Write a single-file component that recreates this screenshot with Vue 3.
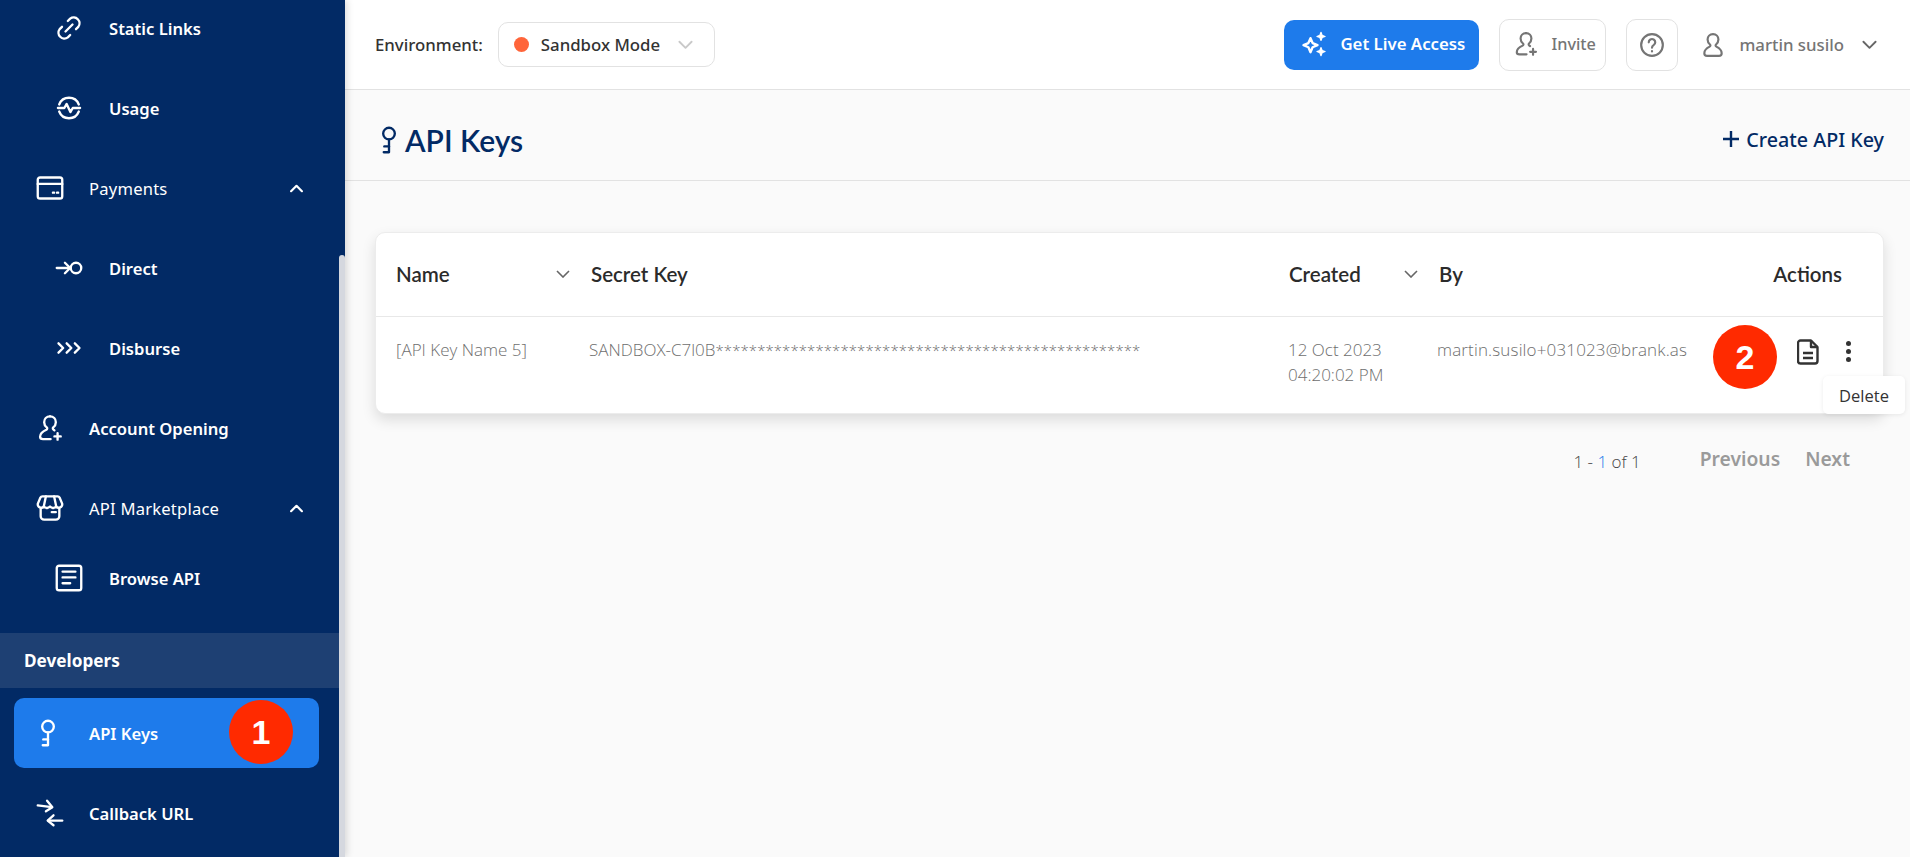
<script setup>
const icons = {
  link: ['M9 15l6-6', 'M11 6l2-2a5 5 0 0 1 7 7l-2 2', 'M13 18l-2 2a5 5 0 0 1-7-7l2-2'],
  usage: ['M3.600 9a9 9 0 0 1 16.800 0', 'M3.600 15a9 9 0 0 0 16.800 0', 'M2.500 12H8l2-3.500 3.200 7 2-3.500h6.300'],
  card: ['M3.500 3h17a2 2 0 0 1 2 2v14a2 2 0 0 1-2 2h-17a2 2 0 0 1-2-2V5a2 2 0 0 1 2-2z', 'M1.500 8.500h21', 'M14.500 16h1M18 16h1'],
  direct: ['M1.500 12h11', 'M8.500 7.500l4.500 4.500-4.500 4.500', 'M18 7.500a4.500 4.500 0 1 1 0 9 4.500 4.500 0 0 1 0-9z'],
  disburse: ['M3 8l4 4-4 4', 'M10 8l4 4-4 4', 'M17 8l4 4-4 4'],
  account: ['M12 2c-3 0-5 2.200-5 5 0 2 1 3.500 2.200 4.500.7.6.5 1.600-.3 2C5.500 15 3.500 17 3.500 19.500c0 1.300 1 2 2.500 2h6.500', 'M12 2c3 0 5 2.200 5 5 0 2-1 3.500-2.200 4.500-.5.4-.5 1.200 0 1.700l1 .8', 'M18.500 16.500v5.500M15.800 19.200h5.400'],
  store: ['M5.500 2h13c.8 0 1.400.4 1.700 1l2.300 5.500a3 3 0 0 1-5.200 2.300 3.500 3.500 0 0 1-5.300 0 3.500 3.500 0 0 1-5.300 0A3 3 0 0 1 1.500 8.500L3.800 3c.3-.6.9-1 1.700-1z', 'M8.500 2L6.700 10.500M15.500 2l1.800 8.500', 'M4 12.500V19a3 3 0 0 0 3 3h10a3 3 0 0 0 3-3v-6.500', 'M13.500 15.500h3.500'],
  doc: ['M3.500 1.500h17a2 2 0 0 1 2 2v17a2 2 0 0 1-2 2h-17a2 2 0 0 1-2-2v-17a2 2 0 0 1 2-2z', 'M6.500 6.500h11M6.500 11.500h11M6.500 16.500h6.500'],
  key: ['M12 1.500a5 5 0 1 1 0 10 5 5 0 0 1 0-10z', 'M12 11.500V22.500H7.500', 'M12 17.500H8'],
  callback: ['M1.500 5.500l12 1.500', 'M9.500 1.500L14 7l-5.500 3.500', 'M22.500 18.500h-12', 'M15 14l-5 4.500 5 4']
}
const nav = [
  { label: 'Static Links', icon: 'link', sub: true },
  { label: 'Usage', icon: 'usage', sub: true },
  { label: 'Payments', icon: 'card', open: true },
  { label: 'Direct', icon: 'direct', sub: true },
  { label: 'Disburse', icon: 'disburse', sub: true },
  { label: 'Account Opening', icon: 'account', strong: true },
  { label: 'API Marketplace', icon: 'store', open: true }
]
</script>

<template>
  <div class="page">
    <aside class="sidebar">
      <div class="thumb"></div>
      <nav class="nav">
        <div
          v-for="item in nav"
          :key="item.label"
          class="row"
          :class="{ sub: item.sub, top: !item.sub, strong: item.strong }"
        >
          <svg class="ico" viewBox="0 0 24 24">
            <path v-for="d in icons[item.icon]" :key="d" :d="d" />
          </svg>
          <span>{{ item.label }}</span>
          <svg v-if="item.open" class="up" viewBox="0 0 12 8"><path d="M1 6.500l5-5 5 5" /></svg>
        </div>
        <div class="row sub browse">
          <svg class="ico" viewBox="0 0 24 24">
            <path v-for="d in icons.doc" :key="d" :d="d" />
          </svg>
          <span>Browse API</span>
        </div>
        <div class="band">Developers</div>
        <div class="active">
          <svg class="ico" viewBox="0 0 24 24">
            <path v-for="d in icons.key" :key="d" :d="d" />
          </svg>
          <span>API Keys</span>
          <b class="badge one">1</b>
        </div>
        <div class="row top strong">
          <svg class="ico" viewBox="0 0 24 24">
            <path v-for="d in icons.callback" :key="d" :d="d" />
          </svg>
          <span>Callback URL</span>
        </div>
      </nav>
    </aside>

    <main class="main">
      <header class="topbar">
        <span class="env">Environment:</span>
        <div class="select">
          <i class="dot"></i>
          <span>Sandbox Mode</span>
          <svg class="chev grey" viewBox="0 0 16 10"><path d="M1.500 1.500L8 8l6.500-6.500" /></svg>
        </div>
        <div class="spacer"></div>
        <button class="live">
          <svg class="spark" viewBox="0 0 24 24">
            <path d="M9 7l1.800 4.200L15 13l-4.200 1.800L9 19l-1.800-4.200L3 13l4.200-1.800z" />
            <path class="fill" d="M18 2l1 2.500 2.500 1-2.500 1L18 9l-1-2.500-2.500-1 2.500-1zM18 15l1 2.500 2.500 1-2.500 1L18 22l-1-2.500-2.500-1 2.500-1z" />
          </svg>
          Get Live Access
        </button>
        <button class="ghost invite">
          <svg class="person" viewBox="0 0 24 24">
            <path v-for="d in icons.account" :key="d" :d="d" />
          </svg>
          Invite
        </button>
        <button class="ghost help">
          <svg class="person" viewBox="0 0 24 24">
            <circle cx="12" cy="12" r="10" />
            <path d="M9 9.500a3 3 0 1 1 4.500 2.600c-1 .6-1.500 1.200-1.500 2.400M12 17.500v.5" />
          </svg>
        </button>
        <div class="user">
          <svg class="person" viewBox="0 0 24 24">
            <path d="M12 2c-3 0-5 2.200-5 5 0 2 1 3.500 2.200 4.500.7.6.5 1.600-.3 2C6 15 4 17 4 19.500 4 21 5 22 6.500 22h11c1.500 0 2.500-1 2.500-2.500 0-2.500-2-4.500-4.900-6-.8-.4-1-1.400-.3-2C16 10.500 17 9 17 7c0-2.800-2-5-5-5z" />
          </svg>
          <span>martin susilo</span>
          <svg class="chev dark" viewBox="0 0 16 10"><path d="M1.500 1.500L8 8l6.500-6.500" /></svg>
        </div>
      </header>

      <section class="titlebar">
        <h1>
          <svg viewBox="0 0 24 24">
            <path v-for="d in icons.key" :key="d" :d="d" />
          </svg>
          API Keys
        </h1>
        <a class="create">
          <svg viewBox="0 0 18 18"><path d="M9 1v16M1 9h16" /></svg>
          Create API Key
        </a>
      </section>

      <section class="content">
        <div class="card">
          <div class="thead">
            <div class="th">Name<svg class="sort" viewBox="0 0 14 8"><path d="M1 1l6 6 6-6" /></svg></div>
            <div class="th">Secret Key</div>
            <div class="th">Created<svg class="sort" viewBox="0 0 14 8"><path d="M1 1l6 6 6-6" /></svg></div>
            <div class="th">By</div>
            <div class="th right">Actions</div>
          </div>
          <div class="tbody">
            <div class="td">[API Key Name 5]</div>
            <div class="td">SANDBOX-C7l0B<span class="stars">***************************************************</span></div>
            <div class="td">12 Oct 2023<br />04:20:02 PM</div>
            <div class="td email">martin.susilo+031023@brank.as</div>
            <div class="actions">
              <b class="badge two">2</b>
              <svg class="docico" viewBox="0 0 22 26">
                <path d="M3.500 1.500H14L20.500 8v14a2.500 2.500 0 0 1-2.500 2.500H3.500A2.500 2.500 0 0 1 1 22V4a2.500 2.500 0 0 1 2.500-2.500z" />
                <path d="M14 1.500V8h6.500M6 14h10M6 19h10" />
              </svg>
              <span class="dots"><i></i><i></i><i></i></span>
              <div class="tooltip">Delete</div>
            </div>
          </div>
        </div>
        <div class="pager">
          <span class="count">1 - <em>1</em> of 1</span>
          <span class="pg prev">Previous</span>
          <span class="pg">Next</span>
        </div>
      </section>
    </main>
  </div>
</template>

<style>
html, body { margin: 0; overflow: hidden; }
</style>

<style scoped>
.page {
  display: flex;
  width: 1910px;
  height: 857px;
  overflow: hidden;
  font-family: "Noto Sans", "Open Sans", sans-serif;
  background: #fafafa;
}
.sidebar {
  position: relative;
  flex: 0 0 345px;
  height: 857px;
  overflow: hidden;
  background: #022a65;
  color: #fff;
  box-shadow: 2px 0 7px rgba(0, 0, 0, 0.14);
  z-index: 2;
}
.thumb {
  position: absolute;
  right: 0;
  top: 255px;
  bottom: 0;
  width: 6px;
  border-radius: 3px 3px 0 0;
  background: #d5d8df;
}
.nav { margin-top: -12px; }
.row {
  display: flex;
  align-items: center;
  height: 80px;
  font-size: 16.600px;
  font-weight: 600;
}
.row.sub { padding-left: 55px; }
.row.sub .ico { margin-right: 26px; }
.row.top { padding-left: 36px; font-weight: 400; letter-spacing: 0.2px; }
.row.top .ico { margin-right: 25px; }
.row.strong { font-weight: 600; letter-spacing: 0; }
.row.browse { height: 58px; margin-top: 1px; margin-bottom: 26px; }
.ico {
  width: 28px;
  height: 28px;
  flex: none;
  fill: none;
  stroke: #fff;
  stroke-width: 2;
  stroke-linecap: round;
  stroke-linejoin: round;
}
.up {
  position: absolute;
  left: 290px;
  width: 13px;
  height: 9px;
  fill: none;
  stroke: #fff;
  stroke-width: 2;
  stroke-linecap: round;
  stroke-linejoin: round;
}
.band {
  display: flex;
  align-items: center;
  height: 55px;
  width: 339px;
  padding-left: 24px;
  box-sizing: border-box;
  background: #1e4073;
  font-size: 17.200px;
  font-weight: 700;
}
.active {
  position: relative;
  display: flex;
  align-items: center;
  width: 305px;
  height: 70px;
  margin: 10px 0 5px 14px;
  padding-left: 20px;
  box-sizing: border-box;
  border-radius: 10px;
  background: #1e7beb;
  font-size: 16.600px;
  font-weight: 600;
}
.active .ico { margin-right: 27px; }
.badge {
  position: absolute;
  display: flex;
  align-items: center;
  justify-content: center;
  width: 64px;
  height: 64px;
  border-radius: 50%;
  background: #ff2a00;
  color: #fff;
  font-family: "Liberation Sans", Arial, sans-serif;
  font-size: 34px;
  font-weight: 700;
}
.badge.one { left: 215px; top: 2px; }
.badge.two { left: -77px; top: -12px; z-index: 1; }

.main { flex: 1; min-width: 0; display: flex; flex-direction: column; }
.topbar {
  display: flex;
  align-items: center;
  height: 89px;
  flex: none;
  padding: 0 33px 0 30px;
  background: #fff;
  border-bottom: 1px solid #e2e2e2;
}
.env { font-size: 16.800px; font-weight: 500; color: #333; margin-right: 15px; }
.select {
  display: flex;
  align-items: center;
  width: 217px;
  height: 45px;
  box-sizing: border-box;
  padding-left: 15px;
  border: 1px solid #e2e2e2;
  border-radius: 10px;
  font-size: 16.800px;
  font-weight: 500;
  color: #333;
}
.dot { width: 15px; height: 15px; border-radius: 50%; background: #ff653a; margin-right: 12px; }
.chev { width: 15px; height: 10px; fill: none; stroke-width: 2; stroke-linecap: round; stroke-linejoin: round; }
.chev.grey { stroke: #c9c9c9; margin-left: 18px; }
.chev.dark { stroke: #666; margin-left: 18px; }
.spacer { flex: 1; }
button { font-family: inherit; cursor: pointer; }
.live {
  display: flex;
  align-items: center;
  width: 195px;
  height: 50px;
  padding: 0 0 2px 16px;
  border: 0;
  border-radius: 10px;
  background: #1e7beb;
  color: #fff;
  font-size: 16.800px;
  font-weight: 600;
}
.spark { width: 28px; height: 28px; margin-right: 12px; fill: none; stroke: #fff; stroke-width: 2; stroke-linejoin: round; }
.spark .fill { fill: #fff; stroke-width: 1; }
.ghost {
  display: flex;
  align-items: center;
  height: 52px;
  box-sizing: border-box;
  border: 1px solid #e2e2e2;
  border-radius: 10px;
  background: #fff;
  color: #757575;
  font-size: 16.300px;
  font-weight: 500;
}
.invite { width: 107px; margin-left: 20px; padding: 0 0 2px 13px; }
.invite .person { margin-right: 12px; }
.help { width: 52px; margin-left: 20px; padding: 0; justify-content: center; }
.person {
  width: 26px;
  height: 26px;
  flex: none;
  fill: none;
  stroke: #757575;
  stroke-width: 2;
  stroke-linecap: round;
  stroke-linejoin: round;
}
.user {
  display: flex;
  align-items: center;
  margin-left: 22px;
  color: #757575;
  font-size: 16.800px;
  font-weight: 500;
}
.user .person { margin-right: 13px; }

.titlebar {
  display: flex;
  align-items: center;
  justify-content: space-between;
  height: 91px;
  flex: none;
  box-sizing: border-box;
  padding: 9px 26px 0 30px;
  border-bottom: 1px solid #e2e2e2;
}
h1 {
  display: flex;
  align-items: center;
  margin: 0;
  font-family: Lato, sans-serif;
  font-size: 30px;
  font-weight: 600;
  color: #022a65;
}
h1 svg {
  width: 28px;
  height: 28px;
  margin-right: 2px;
  fill: none;
  stroke: #022a65;
  stroke-width: 2;
  stroke-linecap: round;
  stroke-linejoin: round;
}
.create {
  display: flex;
  align-items: center;
  margin-top: -1px;
  color: #022a65;
  font-size: 19.700px;
  font-weight: 500;
}
.create svg {
  width: 18px;
  height: 18px;
  margin-right: 6px;
  fill: none;
  stroke: #022a65;
  stroke-width: 2.400;
}

.content { padding: 51px 26px 0 30px; }
.card {
  background: #fff;
  border: 1px solid #ececec;
  border-radius: 10px;
  box-shadow: 0 6px 14px rgba(0, 0, 0, 0.12);
  box-sizing: border-box;
  height: 182px;
}
.thead {
  display: grid;
  grid-template-columns: 195px 698px 150px 1fr auto;
  align-items: center;
  height: 84px;
  box-sizing: border-box;
  padding: 0 41px 2px 20px;
  border-bottom: 1px solid #e8e8e8;
}
.th {
  display: flex;
  align-items: center;
  font-family: Lato, sans-serif;
  font-size: 20.500px;
  font-weight: 600;
  color: #2b2b2b;
}
.th.right { justify-content: flex-end; }
.sort { width: 14px; height: 8px; margin-left: auto; margin-right: 21px; fill: none; stroke: #666; stroke-width: 1.600; }
.tbody {
  display: grid;
  grid-template-columns: 193px 699px 149px 1fr auto;
  padding: 20px 41px 0 20px;
  line-height: 25px;
  color: #6e6e6e;
}
.td {
  white-space: nowrap;
  font-family: "Open Sans", sans-serif;
  font-size: 17px;
  font-weight: 300;
}
.email { letter-spacing: 0.15px; }
.stars { font-size: 15px; letter-spacing: 0.07px; }
.actions { position: relative; width: 52px; height: 50px; }
.docico {
  position: absolute;
  left: 7px;
  top: 2px;
  width: 22px;
  height: 26px;
  fill: none;
  stroke: #333;
  stroke-width: 2.400;
  stroke-linejoin: round;
}
.dots {
  position: absolute;
  left: 56px;
  top: 4px;
  display: flex;
  flex-direction: column;
  gap: 3px;
}
.dots i { display: block; width: 5px; height: 5px; border-radius: 50%; background: #333; }
.tooltip {
  position: absolute;
  left: 33px;
  top: 39px;
  display: flex;
  align-items: center;
  justify-content: center;
  width: 82px;
  height: 38px;
  border-radius: 5px;
  background: #fff;
  box-shadow: 0 1px 4px rgba(0, 0, 0, 0.08);
  color: #333;
  font-size: 16.500px;
  font-weight: 400;
  font-family: "Open Sans", sans-serif;
  z-index: 2;
}
.pager {
  display: flex;
  align-items: center;
  justify-content: flex-end;
  height: 44px;
  margin-top: 22px;
  padding-right: 34px;
}
.count { position: relative; top: 3px; font-family: "Open Sans", sans-serif; font-size: 17px; font-weight: 300; color: #444; margin-right: 59px; }
.count em { font-style: normal; color: #1e7beb; }
.pg { font-size: 19.300px; font-weight: 600; color: #9a9a9a; }
.prev { margin-right: 25px; }
</style>
